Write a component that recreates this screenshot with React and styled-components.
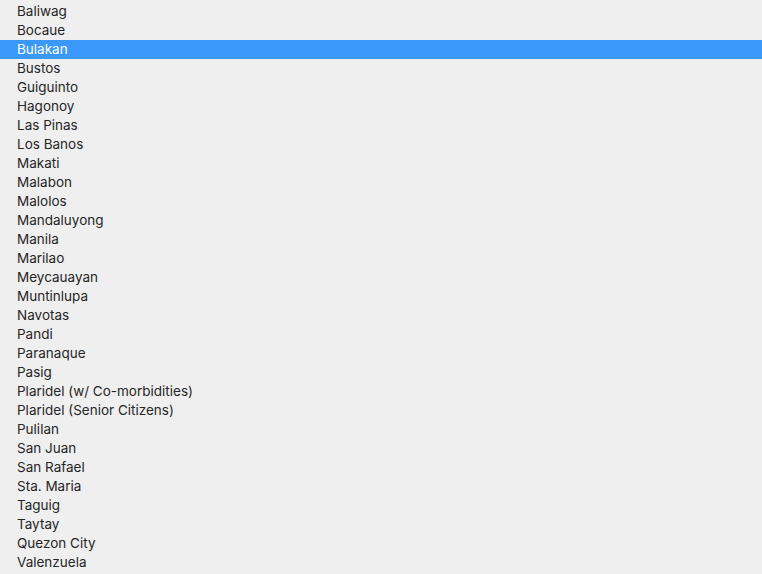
import styled, { createGlobalStyle } from 'styled-components';

const GlobalStyle = createGlobalStyle`
  html, body {
    margin: 0;
    padding: 0;
    background: #efefef;
  }
`

const List = styled.ul`
  list-style: none;
  margin: 0;
  padding: 2px 0 0 0;
  width: 762px;
  height: 574px;
  overflow: hidden;
  background: #efefef;
  font-family: Inter, "Liberation Sans", Arial, sans-serif;
  font-size: 13.5px;
`

const Option = styled.li`
  height: 19px;
  line-height: 19px;
  padding-left: 17px;
  color: ${(p) => (p.$selected ? '#ffffff' : '#262626')};
  background: ${(p) => (p.$selected ? '#3a98fb' : 'transparent')};
  white-space: nowrap;
`

const places = [
  'Baliwag',
  'Bocaue',
  'Bulakan',
  'Bustos',
  'Guiguinto',
  'Hagonoy',
  'Las Pinas',
  'Los Banos',
  'Makati',
  'Malabon',
  'Malolos',
  'Mandaluyong',
  'Manila',
  'Marilao',
  'Meycauayan',
  'Muntinlupa',
  'Navotas',
  'Pandi',
  'Paranaque',
  'Pasig',
  'Plaridel (w/ Co-morbidities)',
  'Plaridel (Senior Citizens)',
  'Pulilan',
  'San Juan',
  'San Rafael',
  'Sta. Maria',
  'Taguig',
  'Taytay',
  'Quezon City',
  'Valenzuela',
];

const App = () => {
  return (
    <>
      <GlobalStyle />
      <List>
        {places.map((name) => (
          <Option key={name} $selected={name === 'Bulakan'}>{name}</Option>
        ))}
      </List>
    </>
  );
};

export default App;
